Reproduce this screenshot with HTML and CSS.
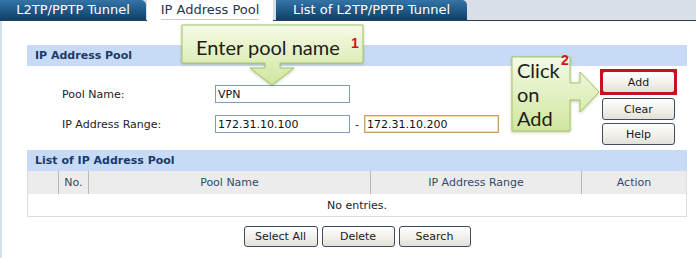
FILE: index.html
```html
<!DOCTYPE html>
<html lang="en">

<head>
    <meta charset="UTF-8">
    <title>IP Address Pool</title>
    <link rel="stylesheet" href="styles.css">
</head>

<body>
    <div class="page">
        <div class="tabs">
            <div class="tab tab-first">L2TP/PPTP Tunnel</div>
            <div class="tab tab-active"><span>IP Address Pool</span></div>
            <div class="tab tab-last">List of L2TP/PPTP Tunnel</div>
        </div>

        <div class="content">
            <div class="panel">
                <div class="section-title">IP Address Pool</div>
                <div class="pool-body">
                    <div class="pool-form">
                        <div class="form-row">
                            <label class="form-label" for="poolName">Pool Name:</label>
                            <input class="field" type="text" id="poolName" value="VPN">
                        </div>
                        <div class="form-row">
                            <label class="form-label" for="ipStart">IP Address Range:</label>
                            <input class="field" type="text" id="ipStart" value="172.31.10.100">
                            <span class="dash">-</span>
                            <input class="field field-focus" type="text" id="ipEnd" value="172.31.10.200">
                        </div>
                    </div>
                    <div class="side-buttons">
                        <div class="marker">
                            <button class="btn">Add</button>
                        </div>
                        <button class="btn">Clear</button>
                        <button class="btn">Help</button>
                    </div>
                </div>

                <div class="section-title">List of IP Address Pool</div>
                <table class="pool-table">
                    <thead>
                        <tr>
                            <th class="col-check"></th>
                            <th class="col-no">No.</th>
                            <th class="col-name">Pool Name</th>
                            <th class="col-range">IP Address Range</th>
                            <th class="col-action">Action</th>
                        </tr>
                    </thead>
                    <tbody>
                        <tr>
                            <td colspan="5">No entries.</td>
                        </tr>
                    </tbody>
                </table>

                <div class="bottom-buttons">
                    <button class="btn btn-select">Select All</button>
                    <button class="btn">Delete</button>
                    <button class="btn btn-search">Search</button>
                </div>
            </div>
        </div>

        <!-- annotation callouts -->
        <div class="callout callout-one">
            <svg width="190" height="70" viewBox="0 0 190 70">
                <defs>
                    <linearGradient id="greenFill1" x1="0" y1="0" x2="0" y2="1">
                        <stop offset="0" stop-color="#f4fae6"/>
                        <stop offset="1" stop-color="#d0e69e"/>
                    </linearGradient>
                    <filter id="soft1" x="-10%" y="-20%" width="120%" height="150%">
                        <feDropShadow dx="0" dy="1" stdDeviation="1.5" flood-color="#6e8a3a" flood-opacity="0.45"/>
                    </filter>
                </defs>
                <path d="M4,3 H185 V41 H102 V46 H116 L94,63 L72,46 H87 V41 H4 Z" fill="url(#greenFill1)" stroke="#a4c36a" stroke-width="1" filter="url(#soft1)"/>
            </svg>
            <span class="callout-text">Enter pool name</span>
            <span class="step-num">1</span>
        </div>

        <div class="callout callout-two">
            <svg width="96" height="84" viewBox="0 0 96 84">
                <defs>
                    <linearGradient id="greenFill2" x1="0" y1="0" x2="0" y2="1">
                        <stop offset="0" stop-color="#f4fae6"/>
                        <stop offset="1" stop-color="#d0e69e"/>
                    </linearGradient>
                    <filter id="soft2" x="-20%" y="-10%" width="140%" height="130%">
                        <feDropShadow dx="0" dy="1" stdDeviation="1.5" flood-color="#6e8a3a" flood-opacity="0.45"/>
                    </filter>
                </defs>
                <path d="M4,3 H62 V29 H72 V18 L91,38 L72,58 V46 H62 V77 H4 Z" fill="url(#greenFill2)" stroke="#a4c36a" stroke-width="1" filter="url(#soft2)"/>
            </svg>
            <span class="callout-text">Click<br>on<br>Add</span>
            <span class="step-num">2</span>
        </div>
    </div>
</body>

</html>
```

FILE: styles.css
```css
body {
    margin: 0;
    font-family: "DejaVu Sans", Verdana, sans-serif;
    font-size: 11px;
    color: #222;
    background: #fff;
}

.page {
    position: relative;
    width: 696px;
    height: 258px;
    overflow: hidden;
}

/* tab strip */
.tabs {
    display: flex;
    align-items: flex-end;
    height: 20px;
    background: #d9dfe9;
    border-bottom: 1px solid #2b3d52;
}

.tab {
    height: 20px;
    line-height: 20px;
    font-size: 13px;
    text-align: center;
    color: #fff;
    background: linear-gradient(#3474a6, #0d4069);
    border-radius: 0 5px 0 0;
}

.tab-first {
    width: 146px;
    margin-right: 1px;
}

.tab-active {
    width: 126px;
    height: 21px;
    margin-bottom: -1px;
    background: #fff;
    color: #243650;
    border-radius: 0;
}

.tab-active span {
    display: inline-block;
    line-height: 19px;
    border-bottom: 1px solid #c8ccd4;
}

.tab-last {
    width: 191px;
    margin-left: 3px;
}

/* main panel */
.content {
    border-left: 2px solid #d2e1ee;
    padding: 24px 0 0 25px;
    height: 213px;
}

.panel {
    width: 660px;
}

.section-title {
    height: 21px;
    line-height: 21px;
    padding-left: 8px;
    background: #c7dbf6;
    color: #1b3a68;
    font-weight: bold;
}

.pool-body {
    display: flex;
    height: 84px;
}

.pool-form {
    padding: 19px 0 0 35px;
}

.form-row {
    display: flex;
    align-items: center;
    margin-bottom: 12px;
}

.form-label {
    width: 153px;
    color: #222;
}

.field {
    box-sizing: border-box;
    width: 135px;
    height: 18px;
    padding: 0 2px;
    border: 1px solid #7f9db9;
    font-family: "DejaVu Sans", Verdana, sans-serif;
    font-size: 11px;
    color: #111;
    outline: none;
}

.field-focus {
    border-color: #c9a060;
    box-shadow: inset 0 0 0 1px #f1dcae;
}

.dash {
    margin: 0 5px 0 5px;
}

.side-buttons {
    display: flex;
    flex-direction: column;
    gap: 3px;
    margin-left: auto;
    margin-right: 12px;
    padding-top: 5px;
}

.btn {
    box-sizing: border-box;
    width: 73px;
    height: 22px;
    padding: 0;
    border: 1px solid #3e4d60;
    border-radius: 3px;
    background: linear-gradient(#ffffff, #efeee8 60%, #e2e0d6);
    font-family: "DejaVu Sans", Verdana, sans-serif;
    font-size: 11px;
    color: #1a1a1a;
}

.marker {
    margin: -2px;
    padding: 0;
    border: 3px solid #c3131e;
    margin-bottom: 0;
    height: 20px;
    overflow: hidden;
}

.marker .btn {
    display: block;
    margin: -1px;
}

/* list table */
.pool-table {
    width: 100%;
    border-collapse: collapse;
    table-layout: fixed;
}

.pool-table th {
    height: 23px;
    padding: 0;
    background: #ececec;
    color: #34486a;
    font-weight: normal;
    border-left: 1px solid #b9b9b9;
}

.pool-table th:first-child {
    border-left: 1px solid #dcdcdc;
}

.pool-table th:last-child {
    border-right: 1px solid #dcdcdc;
}

.col-check {
    width: 30px;
}

.col-no {
    width: 29px;
}

.col-name {
    width: 281px;
}

.col-range {
    width: 210px;
}

.pool-table td {
    height: 22px;
    padding: 0;
    text-align: center;
    color: #222;
    border: 1px solid #dcdcdc;
    border-top: none;
}

.bottom-buttons {
    display: flex;
    justify-content: center;
    gap: 4px;
    margin-top: 9px;
}

.bottom-buttons .btn {
    height: 21px;
}

.btn-select {
    width: 74px;
}

.btn-search {
    width: 72px;
}

/* annotations */
.callout {
    position: absolute;
    font-family: Lato, "Open Sans", sans-serif;
    font-size: 20px;
    color: #1d1d1d;
}

.callout svg {
    display: block;
}

.callout-one {
    left: 178px;
    top: 22px;
}

.callout-one .callout-text {
    position: absolute;
    left: 18px;
    top: 13px;
}

.callout-one .step-num {
    left: 173px;
    top: 13px;
}

.callout-two {
    left: 508px;
    top: 54px;
}

.callout-two .callout-text {
    position: absolute;
    left: 9px;
    top: 4px;
    line-height: 24px;
}

.callout-two .step-num {
    left: 53px;
    top: -2px;
}

.step-num {
    position: absolute;
    font-family: "Liberation Sans", Arial, sans-serif;
    font-size: 14px;
    font-weight: bold;
    color: #d0121c;
}
```
